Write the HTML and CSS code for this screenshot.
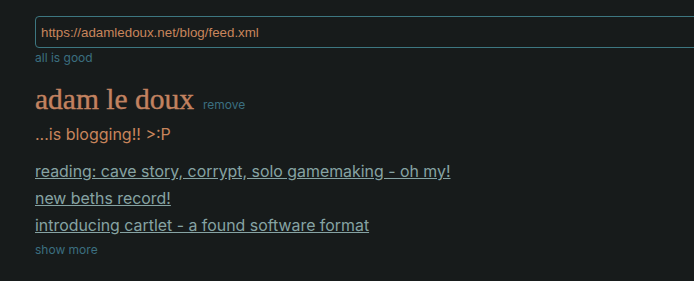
FILE: index.html
```html
<!DOCTYPE html>
<html lang="en">
<head>
    <meta charset="UTF-8">
    <meta name="viewport" content="width=device-width, initial-scale=1.0">
    <title>feeds</title>
    <link rel="stylesheet" href="styles.css">
</head>
<body>
    <div class="container">
        <div class="feed-input">
            <input type="text" value="https://adamledoux.net/blog/feed.xml">
            <div class="status">all is good</div>
        </div>
        <div class="feed">
            <div class="feed-title">
                <h1>adam le doux</h1>
                <a href="#" class="remove">remove</a>
            </div>
            <p class="feed-desc">...is blogging!! &gt;:P</p>
            <ul class="posts">
                <li><a href="#">reading: cave story, corrypt, solo gamemaking - oh my!</a></li>
                <li><a href="#">new beths record!</a></li>
                <li><a href="#">introducing cartlet - a found software format</a></li>
            </ul>
            <a href="#" class="show-more">show more</a>
        </div>
    </div>
</body>
</html>
```
FILE: styles.css
```css
body{
    margin: 0px;
    padding: 0px;
    background-color: #171b1b;
    font-family: Inter, "Noto Sans", sans-serif;
    color: #c8855c;
    overflow: hidden;
}
.container{
    padding: 16px 0 0 35px;
    width: 700px;
}
.feed-input input{
    display: block;
    width: 100%;
    height: 32px;
    box-sizing: border-box;
    padding: 0 5px;
    background-color: #171b1b;
    border: 1px solid #3d7781;
    border-radius: 4px;
    color: #c8855c;
    font-family: "Liberation Sans", Arial, sans-serif;
    font-size: 13.33px;
    outline: none;
}
.status{
    margin-top: 2px;
    font-size: 12px;
    line-height: 16px;
    color: #3b6f80;
}
.feed{
    margin-top: 16px;
}
.feed-title{
    display: flex;
    align-items: baseline;
    gap: 9px;
}
.feed-title h1{
    margin: 0;
    font-family: "Liberation Serif", "Times New Roman", serif;
    font-weight: normal;
    font-size: 29.5px;
    line-height: 34px;
    color: #c28260;
    -webkit-text-stroke: 0.4px #c28260;
}
.remove, .show-more{
    font-size: 12px;
    color: #3b6f80;
    text-decoration: none;
}
.feed-desc{
    margin: 8px 0 14px;
    font-size: 16px;
}
.posts{
    list-style: none;
    margin: 0;
    padding: 0;
}
.posts li{
    line-height: 27px;
}
.posts a{
    font-size: 15.9px;
    color: #86a3a3;
}
.show-more{
    display: block;
    margin-top: 3px;
}
```
